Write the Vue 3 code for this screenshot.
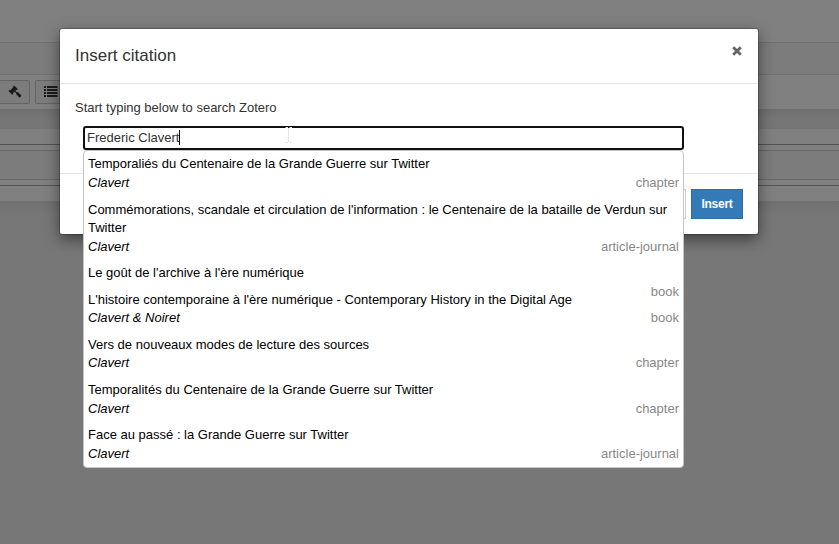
<script setup>
const results = [
  { title: 'Temporaliés du Centenaire de la Grande Guerre sur Twitter', author: 'Clavert', type: 'chapter', cls: 'first' },
  { title: "Commémorations, scandale et circulation de l'information : le Centenaire de la bataille de Verdun sur Twitter", author: 'Clavert', type: 'article-journal', cls: 'long' },
  { title: "Le goût de l'archive à l'ère numérique", author: '', type: 'book', cls: 'untold' },
  { title: "L'histoire contemporaine à l'ère numérique - Contemporary History in the Digital Age", author: 'Clavert & Noiret', type: 'book', cls: 'tight' },
  { title: 'Vers de nouveaux modes de lecture des sources', author: 'Clavert', type: 'chapter', cls: 'tight' },
  { title: 'Temporalités du Centenaire de la Grande Guerre sur Twitter', author: 'Clavert', type: 'chapter', cls: '' },
  { title: 'Face au passé : la Grande Guerre sur Twitter', author: 'Clavert', type: 'article-journal', cls: '' },
]
</script>

<template>
  <div class="page">
    <div class="top"></div>
    <div class="menu"></div>
    <div class="toolbar">
      <div class="tool gavel">
        <svg width="14" height="14" viewBox="0 0 14 14"><path d="M6.1.4 9.8 4.1 8.9 5 8.3 4.8 7.3 5.9 9 7.2 9.8 7 13.6 10.8 11.7 12.7 8 9 8.1 8.1 6.5 6.7 5.1 8.1 5.3 8.8 4.3 9.8.4 6 1.5 4.9 2.3 5.2 5.4 2.1 5.2 1.3Z" /></svg>
      </div>
      <div class="tool">
        <svg width="14" height="11" viewBox="0 0 14 11"><path d="M0 0h2v2H0zm3 0h10.5v2H3zM0 3h2v2H0zm3 0h10.5v2H3zM0 6h2v2H0zm3 0h10.5v2H3zM0 9h2v2H0zm3 0h10.5v2H3z" /></svg>
      </div>
    </div>
    <div class="gap"></div>
    <div class="doc"><div class="band"></div></div>
    <div class="rest"></div>

    <div class="modal">
      <header><span class="heading">Insert citation</span>
        <svg class="close" width="10" height="10" viewBox="0 0 10 10"><path d="M1.2 1.2 8.8 8.8M8.8 1.2 1.2 8.8" /></svg>
      </header>
      <main>
        <p><span class="prompt">Start typing below to search Zotero</span></p>
        <div class="search">
          <div class="field"><span class="query">Frederic Clavert</span><i class="caret"></i>
            <svg class="ibeam" width="8" height="16" viewBox="0 0 8 16"><path d="M.5.5h2.5M4.5.5H7M3.5 1v14M.5 15.5H3M4.5 15.5H7" /></svg>
          </div>
          <div class="list">
            <div v-for="r in results" :key="r.title" class="item" :class="r.cls">
              <div class="title"><span>{{ r.title }}</span></div>
              <div class="meta"><em>{{ r.author }}</em><span class="type">{{ r.type }}</span></div>
            </div>
          </div>
        </div>
      </main>
      <footer><div class="btn cancel"></div><div class="btn primary"><span>Insert</span></div></footer>
    </div>
  </div>
</template>

<style>
body { margin: 0; overflow: hidden; }
</style>
<style scoped>
* { box-sizing: border-box; }
.page { position: relative; height: 544px; background: #777; font-family: "Liberation Sans", sans-serif; font-size: 13px; overflow: hidden; display: flex; flex-direction: column; }
.top { height: 42px; background: #808080; }
.menu { height: 33px; background: #7c7c7c; border: solid #717171; border-width: 1px 0; }
.toolbar { height: 34px; background: #808080; display: flex; gap: 5px; padding-top: 5px; }
.tool { width: 34px; height: 24px; border: 1px solid #656565; border-radius: 2px; display: flex; align-items: center; padding: 0 0 1px 8px; background: #7c7c7c; }
.tool.gavel { width: 30px; border-left: 0; border-radius: 0 2px 2px 0; padding-bottom: 0; }
.tool svg { fill: #1b1b1b; flex: none; }
.gap { height: 20px; background: linear-gradient(#6e6e6e, #767676 10px); }
.doc { height: 72px; background: #808080; padding-top: 15px; }
.band { height: 42px; border: solid #535353; border-width: 1px 0; padding: 5px 0; }
.band::before { content: ''; display: block; height: 30px; background: #7c7c7c; border: solid #666; border-width: 1px 0; box-sizing: border-box; }
.rest { flex: 1; background: linear-gradient(#707070, #777 14px); }

.modal { position: absolute; left: 60px; top: 29px; width: 698px; height: 205px; background: #fff; border-radius: 2px; box-shadow: 0 0 0 1px rgba(0,0,0,.2), 0 5px 15px rgba(0,0,0,.5); color: #333; display: flex; flex-direction: column; }
header { height: 55px; border-bottom: 1px solid #e5e5e5; padding: 0 16px 0 15px; display: flex; align-items: center; justify-content: space-between; }
.heading { font-size: 17px; line-height: 20px; }
.close { stroke: #666; stroke-width: 2.8; margin-bottom: 10px; }
main { height: 90px; padding: 15px; border-bottom: 1px solid #e5e5e5; }
p { margin: 0; line-height: 18px; }
.search { position: relative; width: 601px; margin: 9px 0 0 8px; }
.field { position: relative; height: 24px; border: 2px solid #101014; border-radius: 3px; display: flex; align-items: center; padding: 0 0 1px 2px; background: #fff; }
.caret { width: 1px; height: 15px; background: #000; }
.ibeam { position: absolute; left: 200px; top: -1px; stroke: #e4e4e4; fill: none; }
.list { position: absolute; left: 0; top: 24px; width: 601px; height: 318px; background: #fff; border: 1px solid #c4c4c4; border-radius: 4px; color: #000; line-height: 18px; padding: 4px; }
.item { height: 45px; }
.item.first { height: 46px; }
.item.long { height: 63px; }
.item.untold { height: 27px; }
.meta { height: 19px; display: flex; justify-content: space-between; align-items: center; }
.tight .meta { height: 18px; }
.type { color: #888; margin-left: auto; }
footer { flex: 1; display: flex; justify-content: flex-end; gap: 5px; padding: 15px 15px 0; }
.btn { width: 52px; height: 30px; display: flex; align-items: center; justify-content: center; font-weight: bold; font-size: 12px; letter-spacing: -0.25px; }
.cancel { border: 1px solid #ccc; }
.primary { background: #337ab7; border: 1px solid #2e6da4; color: #fff; }
</style>
